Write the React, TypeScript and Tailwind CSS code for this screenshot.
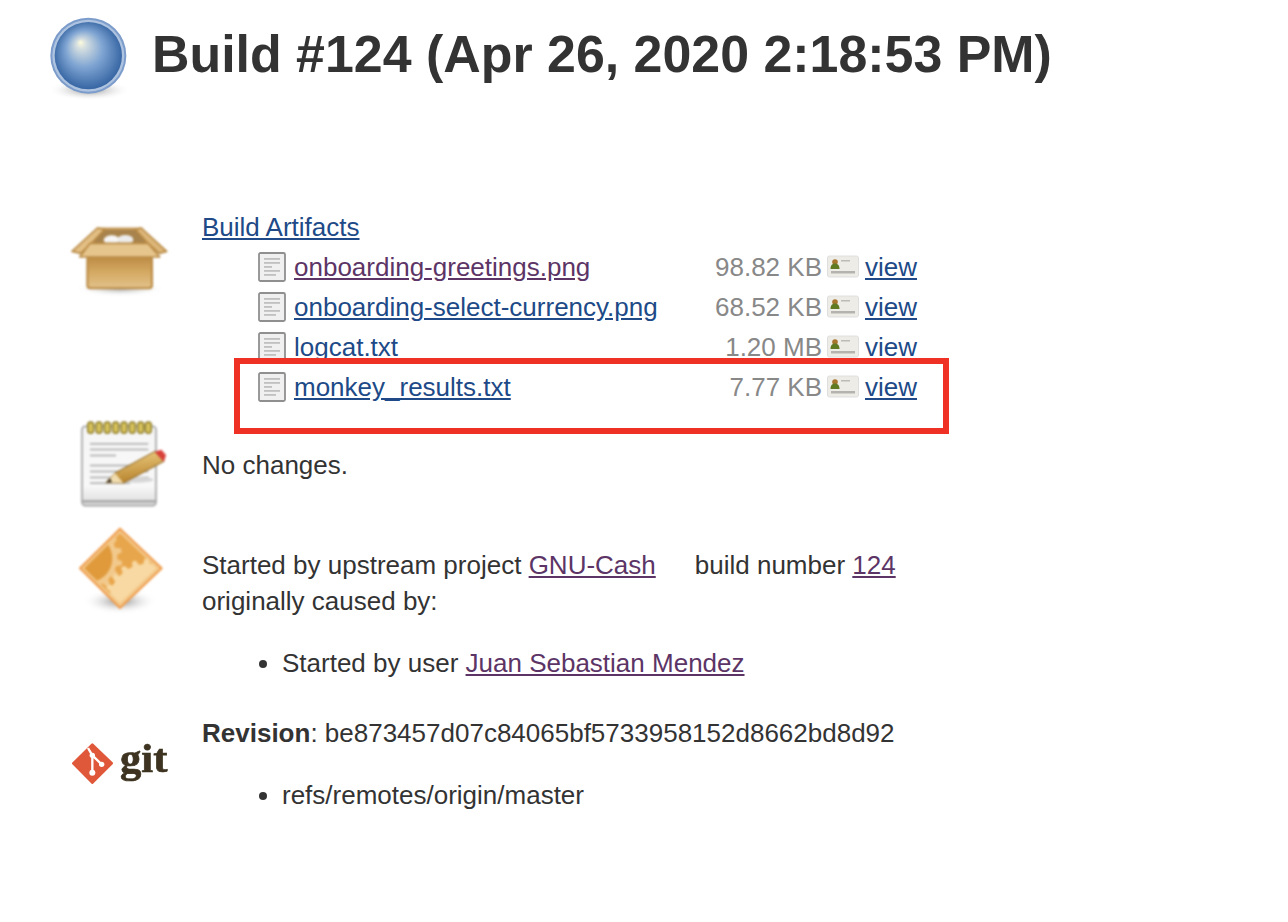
const FONT = "font-['Liberation_Sans',Arial,sans-serif]";

const ARTIFACTS = [
  { name: "onboarding-greetings.png", size: "98.82 KB", visited: true },
  { name: "onboarding-select-currency.png", size: "68.52 KB", visited: false },
  { name: "logcat.txt", size: "1.20 MB", visited: false },
  { name: "monkey_results.txt", size: "7.77 KB", visited: false },
];

// builds a cog outline for the settings icon
function gearPoints(cx: number, cy: number, r: number, teeth: number, offset: number) {
  const pts: string[] = [];
  for (let i = 0; i < teeth; i++) {
    const step = (Math.PI * 2) / teeth;
    const a = i * step + offset;
    [
      [a - step * 0.3, r - 9],
      [a - step * 0.15, r + 6],
      [a + step * 0.15, r + 6],
      [a + step * 0.3, r - 9],
    ].forEach(([ang, rad]) => {
      pts.push(`${(cx + Math.cos(ang) * rad).toFixed(1)},${(cy + Math.sin(ang) * rad).toFixed(1)}`);
    });
  }
  return pts.join(" ");
}

function GlobeIcon() {
  return (
    <svg viewBox="12 0 288 300" className="w-[96px] h-[100px] shrink-0 blur-[0.7px]">
      <defs>
        <radialGradient id="globe" cx="0.5" cy="0.5" r="0.55" fx="0.38" fy="0.3">
          <stop offset="0" stopColor="#fdfbdc" />
          <stop offset="0.14" stopColor="#d3dde0" />
          <stop offset="0.5" stopColor="#7ea4d2" />
          <stop offset="1" stopColor="#2c5c9c" />
        </radialGradient>
        <radialGradient id="globeShadow">
          <stop offset="0" stopColor="#8f8f8f" />
          <stop offset="1" stopColor="#ffffff" stopOpacity="0" />
        </radialGradient>
      </defs>
      <ellipse cx="148" cy="240" rx="124" ry="32" fill="url(#globeShadow)" />
      <circle cx="145" cy="137" r="114" fill="#7c9ccb" />
      <circle cx="145" cy="137" r="108" fill="#adc3df" />
      <circle cx="145" cy="137" r="101" fill="url(#globe)" />
    </svg>
  );
}

function BoxIcon() {
  return (
    <svg viewBox="0 0 360 270" className="w-[120px] h-[90px] blur-[1px]">
      <defs>
        <linearGradient id="boxBody" x1="0" y1="0" x2="0" y2="1">
          <stop offset="0" stopColor="#bb8a42" />
          <stop offset="0.5" stopColor="#d4a963" />
          <stop offset="1" stopColor="#e3c28b" />
        </linearGradient>
        <radialGradient id="boxShadow">
          <stop offset="0" stopColor="#a8a8a8" />
          <stop offset="1" stopColor="#ffffff" stopOpacity="0" />
        </radialGradient>
      </defs>
      <ellipse cx="180" cy="236" rx="135" ry="24" fill="url(#boxShadow)" />
      <polygon points="114,56 244,56 262,102 96,102" fill="#a8834c" stroke="#c79c5a" strokeWidth="7" />
      <ellipse cx="155" cy="90" rx="24" ry="14" fill="#f6f6f6" />
      <ellipse cx="196" cy="89" rx="24" ry="14" fill="#ececec" />
      <polygon points="36,124 112,54 134,58 94,100 62,130" fill="#e3bf85" stroke="#b98a45" strokeWidth="5" strokeLinejoin="round" />
      <polygon points="244,54 320,124 298,130 264,100 226,58" fill="#dcb679" stroke="#b98a45" strokeWidth="5" strokeLinejoin="round" />
      <rect x="82" y="138" width="194" height="97" rx="9" fill="url(#boxBody)" stroke="#b98a45" strokeWidth="6" />
      <polygon points="90,100 264,100 299,141 59,141" fill="#e6c58d" stroke="#b98a45" strokeWidth="5" strokeLinejoin="round" />
    </svg>
  );
}

function NotepadIcon() {
  const rings = [92, 117, 142, 167, 192, 217, 242, 265];
  const lines = [
    [84, 265],
    [101, 265],
    [119, 168],
    [149, 265],
    [167, 265],
    [185, 265],
    [202, 210],
  ];
  return (
    <svg viewBox="0 0 360 300" className="w-[120px] h-[100px] blur-[0.9px]">
      <defs>
        <linearGradient id="paper" x1="0" y1="0" x2="0" y2="1">
          <stop offset="0" stopColor="#f6f6f6" />
          <stop offset="0.75" stopColor="#f8f8f8" />
          <stop offset="1" stopColor="#dcdcdc" />
        </linearGradient>
        <linearGradient id="pencil" x1="0.4" y1="0" x2="0.6" y2="1">
          <stop offset="0" stopColor="#eccb80" />
          <stop offset="1" stopColor="#b47f28" />
        </linearGradient>
      </defs>
      <rect x="66" y="34" width="222" height="238" rx="10" fill="url(#paper)" stroke="#a5a5a5" strokeWidth="5" />
      <rect x="68" y="256" width="218" height="6" fill="#9a9a9a" />
      {rings.map((x) => (
        <rect key={x} x={x - 9} y="21" width="18" height="34" rx="9" fill="#d5c15c" stroke="#8c7a25" strokeWidth="4" />
      ))}
      {lines.map(([y, end]) => (
        <rect key={y} x="90" y={y} width={end - 90} height="5" fill="#b0b0b0" />
      ))}
      <ellipse cx="225" cy="194" rx="55" ry="9" fill="#d6d6d6" />
      <polygon points="138,203 165,174 285,109 312,139 190,204" fill="url(#pencil)" stroke="#8c6420" strokeWidth="3" strokeLinejoin="round" />
      <polygon points="138,203 165,174 190,204" fill="#f0dcae" />
      <polygon points="138,203 150,190 156,202" fill="#3a3020" />
      <polygon points="284,110 304,104 318,120 312,140 300,128" fill="#d8403a" />
    </svg>
  );
}

function GearIcon() {
  return (
    <svg viewBox="0 0 360 300" className="w-[120px] h-[100px] blur-[0.8px]">
      <defs>
        <clipPath id="diamondClip">
          <polygon points="180,40 290,145 180,250 73,145" />
        </clipPath>
        <radialGradient id="gearShadow">
          <stop offset="0" stopColor="#8e8e8e" />
          <stop offset="1" stopColor="#ffffff" stopOpacity="0" />
        </radialGradient>
      </defs>
      <ellipse cx="180" cy="244" rx="112" ry="38" fill="url(#gearShadow)" />
      <polygon
        points="180,26 305,145 180,264 60,145"
        fill="#f3c98c"
        stroke="#ef9c4c"
        strokeWidth="6"
        strokeLinejoin="round"
      />
      <g clipPath="url(#diamondClip)">
        <rect x="50" y="20" width="260" height="250" fill="#e8a64c" />
        <polygon points={gearPoints(85, 115, 96, 16, 0.15)} fill="#f2c98c" />
        <circle cx="85" cy="115" r="72" fill="#e09a3c" />
        <polygon points={gearPoints(265, 250, 128, 22, 0.1)} fill="#f8d9a3" />
      </g>
    </svg>
  );
}

function GitIcon() {
  return (
    <svg viewBox="0 0 360 195" className="w-[120px] h-[65px] blur-[0.6px]">
      <polygon
        points="97,44 155,100 97,158 40,100"
        fill="#e0583a"
        stroke="#e0583a"
        strokeWidth="8"
        strokeLinejoin="round"
      />
      <path d="M84 54L97 76V128M97 76L125 103" fill="none" stroke="#fff" strokeWidth="7" />
      <circle cx="97" cy="76" r="8" fill="#fff" />
      <circle cx="125" cy="103" r="8" fill="#fff" />
      <circle cx="97" cy="128" r="9" fill="#fff" />
      <text
        x="180"
        y="125"
        textLength="142"
        lengthAdjust="spacingAndGlyphs"
        fontFamily="'Liberation Serif', serif"
        fontWeight="700"
        fontSize="118"
        fill="#3d3320"
        stroke="#3d3320"
        strokeWidth="2"
      >
        git
      </text>
    </svg>
  );
}

function FileIcon() {
  return (
    <svg viewBox="0 0 28 30" className="w-[28px] h-[30px] blur-[0.6px]">
      <rect x="1" y="1" width="26" height="28" rx="1.5" fill="#f0f0f0" stroke="#8f8f8f" strokeWidth="1.8" />
      <rect x="6" y="6" width="16" height="1.8" fill="#c0c0c0" />
      <rect x="6" y="10" width="16" height="1.8" fill="#c0c0c0" />
      <rect x="6" y="14" width="8" height="1.8" fill="#c0c0c0" />
      <rect x="6" y="18" width="16" height="1.8" fill="#c0c0c0" />
      <rect x="6" y="22" width="12" height="1.8" fill="#c0c0c0" />
    </svg>
  );
}

function ViewIcon() {
  return (
    <svg viewBox="0 0 32 24" className="w-[32px] h-[24px] blur-[0.7px]">
      <rect x="0.5" y="1" width="31" height="21" rx="2" fill="#eeece7" stroke="#dedede" />
      <circle cx="8" cy="7" r="2.8" fill="#a8752f" />
      <path d="M3.5 14c0-4 2-5.500 4.500-5.500s4.500 1.500 4.500 5.500z" fill="#5f7a22" />
      <rect x="14" y="5" width="9" height="1.500" fill="#bdbbb5" />
      <rect x="4" y="16" width="24" height="2.500" fill="#b5b3ad" />
    </svg>
  );
}

export default function App() {
  return (
    <div className={`${FONT} min-h-screen bg-white pt-[10px] text-[26px] leading-[36px] text-[#333333]`}>
      {/* HEADER */}
      <header className="flex items-center pl-[44px] gap-[12px] h-[100px]">
        <GlobeIcon />
        <h1 className="text-[51.9px] leading-[60px] font-bold -mt-[12px]">Build #124 (Apr 26, 2020 2:18:53 PM)</h1>
      </header>

      {/* ARTIFACTS */}
      <section className="flex pl-[60px] gap-[22px] mt-[97px]">
        <div className="w-[120px] shrink-0 pt-[3px]">
          <BoxIcon />
        </div>
        <div className="relative w-[715px]">
          <a href="#" className="block leading-[40px] underline text-[#204a87]">
            Build Artifacts
          </a>
          <div className="ml-[56px] w-[659px]">
            {ARTIFACTS.map((file) => (
              <div key={file.name} className="grid grid-cols-[36px_1fr_auto_43px_52px] items-center h-10">
                <FileIcon />
                <a href="#" className={`underline ${file.visited ? "text-[#5c3566]" : "text-[#204a87]"}`}>
                  {file.name}
                </a>
                <span className="text-[#888888]">{file.size}</span>
                <span className="pl-[5px]">
                  <ViewIcon />
                </span>
                <a href="#" className="underline text-[#204a87]">
                  view
                </a>
              </div>
            ))}
          </div>
          {/* annotation box drawn over the table */}
          <div className="absolute left-[32px] top-[151px] w-[715px] h-[76px] border-[6px] border-[#ee3124]" />
        </div>
      </section>

      {/* CHANGES */}
      <section className="flex pl-[60px] gap-[22px] mt-[8px]">
        <div className="w-[120px] shrink-0">
          <NotepadIcon />
        </div>
        <p className="pt-[32px]">No changes.</p>
      </section>

      {/* CAUSE */}
      <section className="flex pl-[60px] gap-[22px] mt-[5px]">
        <div className="w-[120px] shrink-0">
          <GearIcon />
        </div>
        <div className="pt-[27px]">
          <p>
            Started by upstream project{" "}
            <a href="#" className="underline text-[#5c3566]">
              GNU-Cash
            </a>
            <span className="ml-[39px]">build number </span>
            <a href="#" className="underline text-[#5c3566]">
              124
            </a>
          </p>
          <p>originally caused by:</p>
          <ul className="list-disc pl-[80px] mt-[26px]">
            <li>
              Started by user{" "}
              <a href="#" className="underline text-[#5c3566]">
                Juan Sebastian Mendez
              </a>
            </li>
          </ul>
        </div>
      </section>

      {/* REVISION */}
      <section className="flex pl-[60px] gap-[22px] mt-[34px]">
        <div className="w-[120px] shrink-0 pt-[15px]">
          <GitIcon />
        </div>
        <div>
          <p>
            <b>Revision</b>: be873457d07c84065bf5733958152d8662bd8d92
          </p>
          <ul className="list-disc pl-[80px] mt-[26px]">
            <li>refs/remotes/origin/master</li>
          </ul>
        </div>
      </section>
    </div>
  );
}
